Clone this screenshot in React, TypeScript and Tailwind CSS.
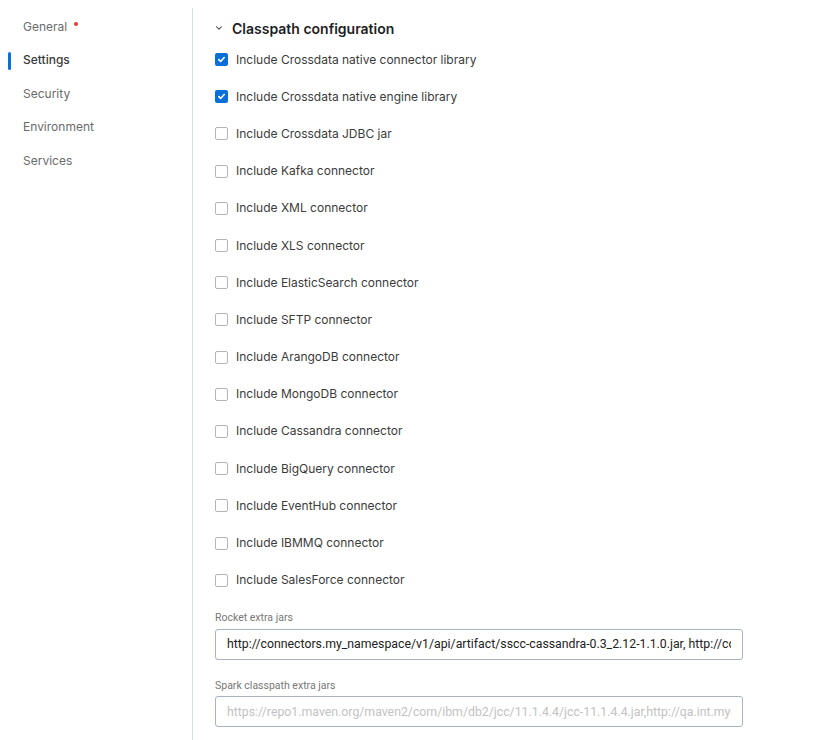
import { ChevronDown } from 'lucide-react';

const navItems = [
  { label: 'General', dot: true },
  { label: 'Settings', active: true },
  { label: 'Security' },
  { label: 'Environment' },
  { label: 'Services' },
];

const options = [
  { label: 'Include Crossdata native connector library', checked: true },
  { label: 'Include Crossdata native engine library', checked: true },
  { label: 'Include Crossdata JDBC jar' },
  { label: 'Include Kafka connector' },
  { label: 'Include XML connector' },
  { label: 'Include XLS connector' },
  { label: 'Include ElasticSearch connector' },
  { label: 'Include SFTP connector' },
  { label: 'Include ArangoDB connector' },
  { label: 'Include MongoDB connector' },
  { label: 'Include Cassandra connector' },
  { label: 'Include BigQuery connector' },
  { label: 'Include EventHub connector' },
  { label: 'Include IBMMQ connector' },
  { label: 'Include SalesForce connector' },
];

function Checkbox({ checked }: { checked?: boolean }) {
  if (checked) {
    return (
      <span className="w-[13px] h-[13px] rounded-[2px] bg-[#0b6fd8] flex items-center justify-center shrink-0">
        <svg width="9" height="9" viewBox="0 0 10 10" fill="none">
          <path d="M2 5.2l2 2 4-4.4" stroke="white" strokeWidth={1.8} strokeLinecap="round" strokeLinejoin="round" />
        </svg>
      </span>
    );
  }
  return <span className="w-[13px] h-[13px] rounded-[2px] border border-[#b5b5b5] bg-white shrink-0" />;
}

export default function App() {
  return (
    <div className="flex bg-white w-[826px] h-[740px] overflow-hidden text-[#333] font-['Inter',sans-serif]">
      <aside className="w-[192px] shrink-0 pt-[10px]">
        <ul className="flex flex-col">
          {navItems.map(item => (
            <li key={item.label} className="relative h-[33.5px] flex items-center pl-[23px] text-[12px]">
              {item.active && <span className="absolute left-[8px] top-[8px] w-[3px] h-[18px] rounded-full bg-[#0b6fd8]" />}
              <span className={item.active ? 'text-[#3a3a3a] font-medium' : 'text-[#6b6b6b]'}>{item.label}</span>
              {item.dot && <span className="w-[4px] h-[4px] rounded-full bg-[#ee3a2e] ml-[7px] -mt-[6px]" />}
            </li>
          ))}
        </ul>
      </aside>
      <div className="w-px bg-[#d8dde3] mt-[8px]" />
      <main className="flex-1 pl-[22px] pt-[18px]">
        <div className="flex items-center h-[20px]">
          <ChevronDown className="w-[10px] h-[10px] text-[#333] ml-[-1px] mr-[8px]" strokeWidth={2.5} />
          <h2 className="text-[14px] font-semibold text-[#1f1f1f]">Classpath configuration</h2>
        </div>
        <div className="flex flex-col mt-[3px]">
          {options.map(opt => (
            <label key={opt.label} className="h-[37.2px] flex items-center gap-[8px] text-[12px] text-[#3b3b3b]">
              <Checkbox checked={opt.checked} />
              <span>{opt.label}</span>
            </label>
          ))}
        </div>
        <div className="mt-[11px] w-[528px] font-['Roboto',sans-serif]">
          <label className="block text-[10.5px] text-[#777]">Rocket extra jars</label>
          <input
            readOnly
            value="http://connectors.my_namespace/v1/api/artifact/sscc-cassandra-0.3_2.12-1.1.0.jar, http://connectors.my_namespace/v1/api/artifact/sscc-mongodb.jar"
            className="mt-[3px] block w-full h-[31px] border border-[#a9b2bd] rounded-[3px] px-[11px] text-[12.3px] text-[#222] outline-none bg-white"
          />
          <label className="block mt-[18px] text-[10.5px] text-[#777]">Spark classpath extra jars</label>
          <input
            readOnly
            placeholder="https://repo1.maven.org/maven2/com/ibm/db2/jcc/11.1.4.4/jcc-11.1.4.4.jar,http://qa.int.mycompany.com/jars/extra.jar"
            className="mt-[3px] block w-full h-[31px] border border-[#a9b2bd] rounded-[3px] px-[11px] text-[12.3px] text-[#222] placeholder:text-[#c2c2c2] outline-none bg-white"
          />
        </div>
      </main>
    </div>
  );
}
